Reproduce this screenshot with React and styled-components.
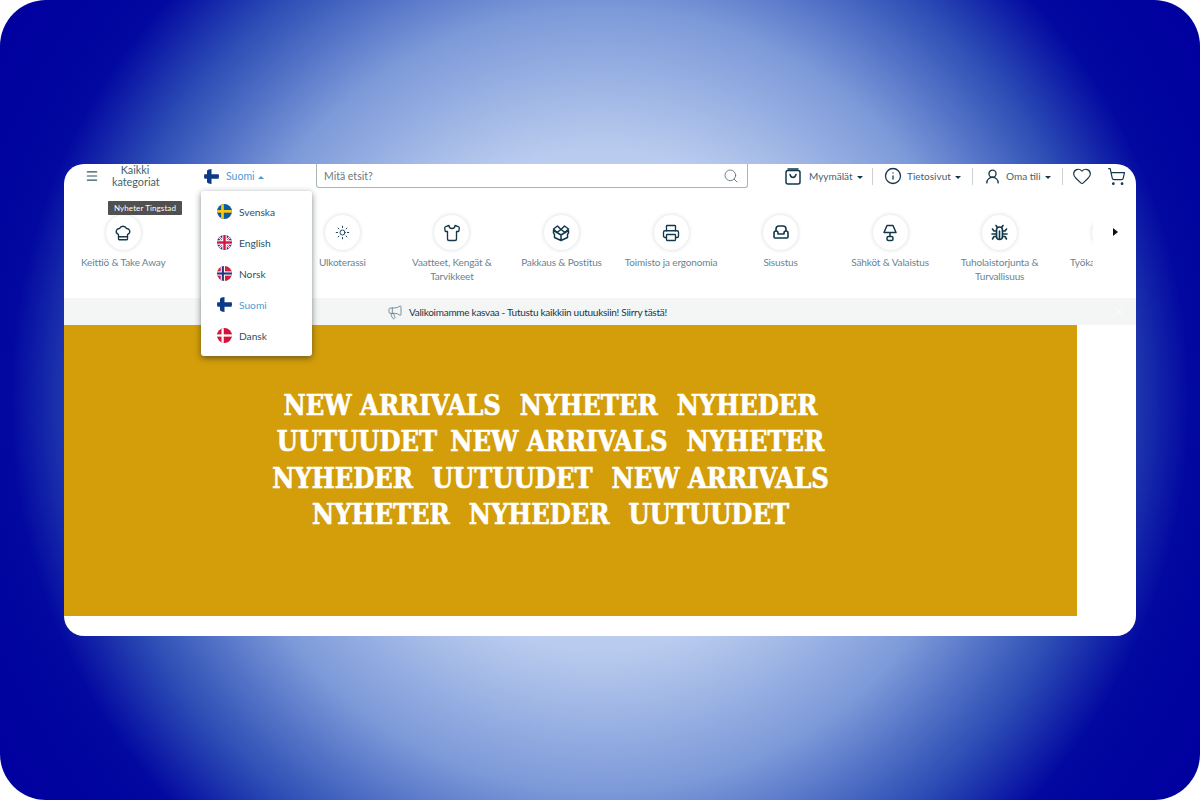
import React from 'react'
import styled, { createGlobalStyle } from 'styled-components'
import { ChefHat, Sun, Shirt, Printer, Menu, Search, Info, UserRound, Heart, ShoppingCart, Megaphone, X } from 'lucide-react'

const GlobalStyle = createGlobalStyle`
body{
  margin:0;
  background:#fff;
  font-family:"Lato","Noto Sans",sans-serif;
}
`

const Stage = styled.div`
width:1200px;
height:800px;
border-radius:46px;
overflow:hidden;
display:flex;
align-items:center;
justify-content:center;
background:radial-gradient(circle at 50% 50%, #e4ecfa 0, #b9cbee 250px, #7d9ad9 390px, #2c4db5 510px, #0208a0 590px, #00009e 700px);
`

const Panel = styled.div`
position:relative;
width:1072px;
height:472px;
background:#fff;
border-radius:20px;
overflow:hidden;
display:flex;
flex-direction:column;
`

const Header = styled.header`
height:24px;
flex:none;
display:flex;
align-items:center;
color:#12384a;
`

const Burger = styled.div`
width:48px;
padding-left:21px;
box-sizing:border-box;
display:flex;
color:#2d5568;
`

const AllCats = styled.div`
width:46px;
font-size:10.8px;
line-height:12.5px;
text-align:center;
color:#3f5f6e;
`

const LangToggle = styled.div`
width:158px;
padding-left:46px;
box-sizing:border-box;
display:flex;
align-items:center;
gap:7px;
font-size:10.5px;
color:#4d9bd6;
`

const Caret = styled.span`
display:inline-block;
width:0;
height:0;
margin-left:${p => p.$gap || 4}px;
vertical-align:middle;
border-left:3px solid transparent;
border-right:3px solid transparent;
border-top:${p => (p.$up ? 'none' : '3px solid #12384a')};
border-bottom:${p => (p.$up ? '3px solid #4d9bd6' : 'none')};
`

const SearchBox = styled.div`
width:432px;
height:24px;
box-sizing:border-box;
flex:none;
display:flex;
align-items:center;
justify-content:space-between;
padding:0 8px 0 7px;
border:1px solid #aab7b9;
border-top:none;
border-radius:0 0 3px 3px;
font-size:10.5px;
color:#66777f;
`

const Tools = styled.div`
display:flex;
align-items:center;
margin-left:37px;
`

const ToolLink = styled.div`
display:flex;
align-items:center;
gap:${p => p.$gap || 5}px;
font-size:10px;
color:#3f5f6e;
width:${p => p.$w}px;
`

const Divider = styled.span`
width:1px;
height:17px;
background:#c9d1d3;
margin:0 ${p => p.$right || 11}px 0 0;
`

const CartSlot = styled.span`
display:flex;
margin-left:15px;
`

const CatRow = styled.div`
height:110px;
flex:none;
display:flex;
`

const CatTrack = styled.div`
width:1029px;
overflow:hidden;
display:flex;
padding-left:4.5px;
box-sizing:border-box;
padding-top:27px;
`

const CatItem = styled.div`
width:109.55px;
flex:none;
display:flex;
flex-direction:column;
align-items:center;
`

const CatCircle = styled.div`
width:35px;
height:35px;
border-radius:50%;
background:#fff;
box-shadow:0 0 4px rgba(40,60,70,.2);
display:flex;
align-items:center;
justify-content:center;
color:#12384a;
`

const CatLabel = styled.div`
width:96px;
margin-top:6px;
font-size:10px;
letter-spacing:-0.15px;
line-height:13.5px;
text-align:center;
color:#688491;
display:flex;
justify-content:center;
white-space:${p => (p.$nowrap ? 'nowrap' : 'normal')};
`

const NextArrow = styled.div`
flex:1;
display:flex;
align-items:flex-start;
justify-content:center;
padding:40px 0 0 2px;
`

const ArrowHead = styled.span`
width:0;
height:0;
border-top:4px solid transparent;
border-bottom:4px solid transparent;
border-left:5px solid #111;
`

const Notice = styled.div`
height:27px;
flex:none;
background:#f4f5f5;
display:flex;
align-items:center;
padding-left:323px;
gap:6px;
font-size:10px;
letter-spacing:-0.27px;
color:#12384a;
position:relative;
`

const CloseBtn = styled.span`
position:absolute;
right:11px;
top:7px;
color:#fff;
display:flex;
`

const Bottom = styled.div`
flex:1;
display:flex;
`

const Banner = styled.div`
width:1013px;
height:291px;
background:#d39e0a;
padding:63px 40px 0 0;
box-sizing:border-box;
color:#fff;
`

const BannerLine = styled.div`
display:flex;
justify-content:center;
gap:19px;
height:36.3px;
line-height:36.3px;
font-family:"DejaVu Serif Condensed","DejaVu Serif",serif;
font-weight:700;
font-size:27px;
-webkit-text-stroke:0.6px #fff;
white-space:nowrap;
`

const Phrase = styled.span`
margin-left:${p => p.$pull || 0}px;
`

const Tooltip = styled.div`
position:absolute;
left:44px;
top:37px;
height:14px;
width:74px;
border-radius:1px;
background:#505050;
color:#fff;
font-size:8px;
letter-spacing:.1px;
display:flex;
align-items:center;
justify-content:center;
`

const LangMenu = styled.div`
position:absolute;
left:137px;
top:27px;
width:111px;
height:165px;
box-sizing:border-box;
padding-top:5px;
background:#fff;
border-radius:3px;
box-shadow:0 2px 6px rgba(20,30,40,.55);
`

const LangOption = styled.div`
height:31px;
display:flex;
align-items:center;
gap:7px;
padding-left:16px;
font-size:10.2px;
color:${p => (p.$active ? '#4d9bd6' : '#2f4f5f')};
`

function Flag({ code, prefix = 'menu' }) {
  const clip = `clip-${prefix}-${code}`
  return (
    <svg width="15" height="15" viewBox="0 0 20 20">
      <defs><clipPath id={clip}><circle cx="10" cy="10" r="10" /></clipPath></defs>
      <g clipPath={`url(#${clip})`}>
        {code === 'se' && <>
          <rect width="20" height="20" fill="#0b5aa6" />
          <rect x="5.5" width="3.6" height="20" fill="#fcc90a" />
          <rect y="8" width="20" height="3.6" fill="#fcc90a" />
        </>}
        {code === 'en' && <>
          <rect width="20" height="20" fill="#2a3a80" />
          <path d="M0 0L20 20M20 0L0 20" stroke="#fff" strokeWidth="3" />
          <path d="M0 0L20 20M20 0L0 20" stroke="#d2163c" strokeWidth="1" />
          <rect x="7" width="6" height="20" fill="#fff" />
          <rect y="7" width="20" height="6" fill="#fff" />
          <rect x="8.4" width="3.2" height="20" fill="#d2163c" />
          <rect y="8.4" width="20" height="3.2" fill="#d2163c" />
        </>}
        {code === 'no' && <>
          <rect width="20" height="20" fill="#d0213f" />
          <rect x="5" width="5.6" height="20" fill="#fff" />
          <rect y="7.2" width="20" height="5.6" fill="#fff" />
          <rect x="6.4" width="2.8" height="20" fill="#27357e" />
          <rect y="8.6" width="20" height="2.8" fill="#27357e" />
        </>}
        {code === 'fi' && <>
          <rect width="20" height="20" fill="#fff" />
          <rect x="4" width="6" height="20" fill="#0d3a86" />
          <rect y="7" width="20" height="6" fill="#0d3a86" />
        </>}
        {code === 'dk' && <>
          <rect width="20" height="20" fill="#d2133a" />
          <rect x="6" width="3" height="20" fill="#fff" />
          <rect y="8.5" width="20" height="3" fill="#fff" />
        </>}
      </g>
    </svg>
  )
}

function BagIcon() {
  return (
    <svg width="16" height="17" viewBox="0 0 16 17" fill="none" stroke="#12384a" strokeWidth="1.5" strokeLinecap="round" strokeLinejoin="round">
      <rect x="1" y="2.5" width="14" height="13.5" rx="2" />
      <path d="M3 1h10M5 6.5c.6 2 1.7 3 3 3s2.4-1 3-3" />
    </svg>
  )
}

function BoxIcon() {
  return (
    <svg width="18" height="18" viewBox="0 0 18 18" fill="none" stroke="#12384a" strokeWidth="1.5" strokeLinejoin="round">
      <path d="M9 5.5L5.5 2 1.5 5l3.5 3.5L9 5.5l4 3 3.5-3.5L12.5 2 9 5.5z" />
      <path d="M5 8.5L1.5 6.5c-.5 2 0 3 1 4v3L9 16.5l6.5-3v-3c1-1 1.5-2 1-4L13 8.5 9 11 5 8.5zM9 11v5.5" />
    </svg>
  )
}

function LampIcon() {
  return (
    <svg width="16" height="18" viewBox="0 0 16 18" fill="none" stroke="#12384a" strokeWidth="1.5" strokeLinejoin="round">
      <path d="M5 1.5h6l3 7H2l3-7zM8 8.5v4" />
      <rect x="5" y="12.5" width="6" height="4" rx="1.5" />
    </svg>
  )
}

function ChairIcon() {
  return (
    <svg width="16" height="15" viewBox="0 0 16 15" fill="none" stroke="#12384a" strokeWidth="1.6" strokeLinejoin="round">
      <path d="M3 6V4a3 3 0 0 1 3-3h4a3 3 0 0 1 3 3v2" />
      <path d="M1 8a2 2 0 0 1 4 0v1h6V8a2 2 0 0 1 4 0v4a1 1 0 0 1-1 1H2a1 1 0 0 1-1-1V8z" />
    </svg>
  )
}

function BeetleIcon() {
  return (
    <svg width="17" height="18" viewBox="0 0 17 18" fill="none" stroke="#12384a" strokeWidth="1.6" strokeLinecap="round" strokeLinejoin="round">
      <path d="M5 1.5l1.5 2M12 1.5l-1.5 2" />
      <path d="M5.5 6a3 3 0 0 1 6 0v6.5a3 3 0 0 1-6 0V6z" />
      <path d="M5.5 7H3L1.5 5M11.5 7H14l1.5-2M5.5 10H1M11.5 10H16M5.5 12.5H3L1.5 15M11.5 12.5H14l1.5 2.5M8.5 7v8" />
    </svg>
  )
}

const icon = { size: 18, strokeWidth: 1.8 }

const cats = [
  { label: 'Keittiö & Take Away', icon: <ChefHat {...icon} />, nowrap: true },
  { label: 'Siivous', icon: <Sun {...icon} /> },
  { label: 'Ulkoterassi', icon: <Sun size={15} strokeWidth={1.5} /> },
  { label: 'Vaatteet, Kengät & Tarvikkeet', icon: <Shirt {...icon} /> },
  { label: 'Pakkaus & Postitus', icon: <BoxIcon />, nowrap: true },
  { label: 'Toimisto ja ergonomia', icon: <Printer {...icon} />, nowrap: true },
  { label: 'Sisustus', icon: <ChairIcon /> },
  { label: 'Sähköt & Valaistus', icon: <LampIcon />, nowrap: true },
  { label: 'Tuholaistorjunta & Turvallisuus', icon: <BeetleIcon /> },
  { label: 'Työkalut & Koneet', icon: null, nowrap: true },
]

const langs = [
  { code: 'se', label: 'Svenska' },
  { code: 'en', label: 'English' },
  { code: 'no', label: 'Norsk' },
  { code: 'fi', label: 'Suomi', active: true },
  { code: 'dk', label: 'Dansk' },
]

const bannerLines = [
  [{ text: 'NEW ARRIVALS' }, { text: 'NYHETER' }, { text: 'NYHEDER' }],
  [{ text: 'UUTUUDET' }, { text: 'NEW ARRIVALS', pull: -6 }, { text: 'NYHETER' }],
  [{ text: 'NYHEDER' }, { text: 'UUTUUDET' }, { text: 'NEW ARRIVALS' }],
  [{ text: 'NYHETER' }, { text: 'NYHEDER' }, { text: 'UUTUUDET' }],
]

function App() {
  return (
    <>
      <GlobalStyle />
      <Stage>
        <Panel>
          <Header>
            <Burger><Menu size={14} strokeWidth={2} /></Burger>
            <AllCats>Kaikki kategoriat</AllCats>
            <LangToggle>
              <Flag code="fi" prefix="top" />
              <span>Suomi<Caret $up $gap={3} /></span>
            </LangToggle>
            <SearchBox>
              <span>Mitä etsit?</span>
              <Search size={16} strokeWidth={1.3} color="#5b6f78" />
            </SearchBox>
            <Tools>
              <ToolLink $w={87} $gap={8}><BagIcon /><span>Myymälät<Caret /></span></ToolLink>
              <Divider />
              <ToolLink $w={88}><Info size={18} strokeWidth={1.7} color="#12384a" /><span>Tietosivut<Caret /></span></ToolLink>
              <Divider />
              <ToolLink $w={78}><UserRound size={17} strokeWidth={1.9} color="#12384a" /><span>Oma tili<Caret /></span></ToolLink>
              <Divider $right={9} />
              <Heart size={20} strokeWidth={1.4} color="#12384a" />
              <CartSlot><ShoppingCart size={19} strokeWidth={1.5} color="#12384a" /></CartSlot>
            </Tools>
          </Header>
          <CatRow>
            <CatTrack>
              {cats.map(c => (
                <CatItem key={c.label}>
                  <CatCircle>{c.icon}</CatCircle>
                  <CatLabel $nowrap={c.nowrap}>{c.label}</CatLabel>
                </CatItem>
              ))}
            </CatTrack>
            <NextArrow><ArrowHead /></NextArrow>
          </CatRow>
          <Notice>
            <Megaphone size={16} strokeWidth={1.2} color="#5c7a88" />
            Valikoimamme kasvaa - Tutustu kaikkiin uutuuksiin! Siirry tästä!
            <CloseBtn><X size={13} strokeWidth={1.5} /></CloseBtn>
          </Notice>
          <Bottom>
            <Banner>
              {bannerLines.map((line, i) => (
                <BannerLine key={i}>
                  {line.map((p, j) => <Phrase key={j} $pull={p.pull}>{p.text}</Phrase>)}
                </BannerLine>
              ))}
            </Banner>
          </Bottom>
          <Tooltip>Nyheter Tingstad</Tooltip>
          <LangMenu>
            {langs.map(l => (
              <LangOption key={l.code} $active={l.active}>
                <Flag code={l.code} />
                {l.label}
              </LangOption>
            ))}
          </LangMenu>
        </Panel>
      </Stage>
    </>
  )
}

export default App
